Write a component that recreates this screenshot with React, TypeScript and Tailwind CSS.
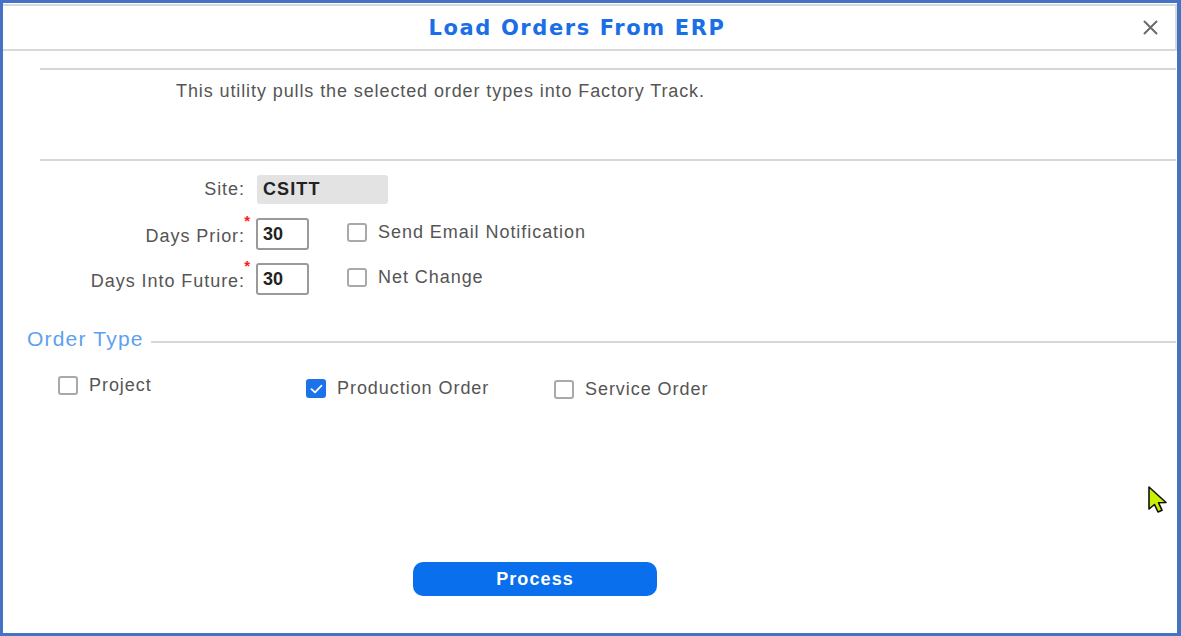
import React from "react";

function Box({ checked = false }: { checked?: boolean }) {
  if (checked) {
    return (
      <span className="w-[20px] h-[19px] rounded-[3px] bg-[#1a73e8] flex items-center justify-center shrink-0">
        <svg width="13" height="10" viewBox="0 0 13 10" fill="none">
          <path d="M1.5 5.2 L5 8.4 L11.5 1.6" stroke="white" strokeWidth="1.8" strokeLinecap="round" strokeLinejoin="round" />
        </svg>
      </span>
    );
  }
  return <span className="w-[20px] h-[19px] rounded-[3px] border-2 border-[#a9a9a9] bg-white shrink-0 box-border" />;
}

function Field({ label, value }: { label: string; value: string }) {
  return (
    <div className="flex items-center h-[32px]">
      <div className="w-[243px] text-right text-[18px] tracking-[0.95px] text-[#555] relative pr-[1px] pt-[4px]">
        {label}
        <span className="absolute right-[-5px] top-[-9px] text-[#ff1a1a] text-[15px] font-bold">*</span>
      </div>
      <div className="ml-[10px] w-[53px] h-[32px] border-2 border-[#9a9a9a] rounded-[3px] box-border flex items-center pl-[5px] text-[18px] font-bold text-[#222]">
        {value}
      </div>
    </div>
  );
}

export default function App() {
  return (
    <div className="w-[1181px] h-[636px] bg-white border-solid border-[#4472c4] border-t-[3px] border-l-[3px] border-r-4 border-b-[3px] box-border flex flex-col font-['Liberation_Sans',Arial,sans-serif] relative overflow-hidden">
      <header className="h-[47px] mt-[1px] box-border border-t-2 border-r-2 border-b-2 border-[#d9d9d9] flex items-center justify-center relative shrink-0 pt-[3px]">
        <h1 className="font-['DejaVu_Sans',Verdana,sans-serif] font-bold text-[21px] tracking-[1.6px] text-[#1a6fe6] ml-[-24px]">
          Load Orders From ERP
        </h1>
        <button className="absolute right-[17px] top-[13px] w-[16px] h-[16px] flex items-center justify-center">
          <svg width="15" height="15" viewBox="0 0 15 15">
            <path d="M1.5 1.5 L13.5 13.5 M13.5 1.5 L1.5 13.5" stroke="#6b6b6b" strokeWidth="2" strokeLinecap="round" />
          </svg>
        </button>
      </header>

      <div className="ml-[37px] mr-[1px] mt-[17px] h-[2px] bg-[#d6d6d6] shrink-0" />

      <p className="ml-[173px] mt-[11px] text-[18px] leading-[21px] tracking-[0.9px] text-[#555]">
        This utility pulls the selected order types into Factory Track.
      </p>

      <div className="ml-[37px] mr-[1px] mt-[57px] h-[2px] bg-[#d6d6d6] shrink-0" />

      <div className="flex items-center mt-[14px] h-[29px]">
        <div className="w-[243px] text-right text-[18px] tracking-[0.95px] text-[#555] pr-[1px]">Site:</div>
        <div className="ml-[11px] w-[131px] h-[29px] bg-[#e3e3e3] rounded-[3px] flex items-center pl-[6px] text-[18px] font-bold text-[#222] tracking-[1.1px]">
          CSITT
        </div>
      </div>

      <div className="flex items-start mt-[14px]">
        <div className="flex flex-col gap-[13px]">
          <Field label="Days Prior:" value="30" />
          <Field label="Days Into Future:" value="30" />
        </div>
        <div className="flex flex-col gap-[13px] ml-[38px]">
          <label className="flex items-center h-[32px] gap-[11px] pb-[3px]">
            <Box />
            <span className="text-[18px] tracking-[0.95px] text-[#555]">Send Email Notification</span>
          </label>
          <label className="flex items-center h-[32px] gap-[11px] pb-[3px]">
            <Box />
            <span className="text-[18px] tracking-[0.95px] text-[#555]">Net Change</span>
          </label>
        </div>
      </div>

      <div className="flex items-center mt-[32px] ml-[24px] mr-[1px] h-[24px]">
        <span className="text-[21px] tracking-[1.2px] text-[#5e9ff2]">Order Type</span>
        <div className="flex-1 h-[2px] bg-[#d6d6d6] ml-[7px] mt-[6px]" />
      </div>

      <div className="flex mt-[25px] ml-[55px] h-[24px]">
        <label className="w-[248px] flex items-start gap-[11px]">
          <Box />
          <span className="text-[18px] tracking-[0.95px] text-[#555] leading-[18px]">Project</span>
        </label>
        <label className="w-[248px] flex items-start gap-[11px] mt-[3px]">
          <Box checked />
          <span className="text-[18px] tracking-[0.95px] text-[#555] leading-[18px]">Production Order</span>
        </label>
        <label className="flex items-start gap-[11px] mt-[4px]">
          <Box />
          <span className="text-[18px] tracking-[0.95px] text-[#555] leading-[18px]">Service Order</span>
        </label>
      </div>

      <div className="mt-[162px] ml-[410px]">
        <button className="w-[244px] h-[34px] rounded-[10px] bg-[#0a6fed] text-white font-bold text-[18px] tracking-[1.1px] flex items-center justify-center">
          Process
        </button>
      </div>

      <svg className="absolute left-[1144px] top-[482px]" width="24" height="30" viewBox="0 0 24 30">
        <path d="M2 2 L2 24 L7.5 19.5 L11 27 L15 25.2 L11.6 17.8 L19 17.5 Z" fill="#c8f000" stroke="#111" strokeWidth="1.6" strokeLinejoin="round" />
      </svg>
    </div>
  );
}
